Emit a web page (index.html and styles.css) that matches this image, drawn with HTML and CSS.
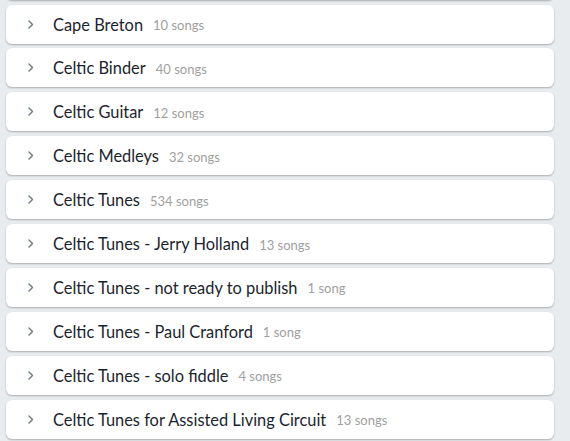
FILE: index.html
```html
<!DOCTYPE html>
<html>
<head>
<meta charset="utf-8">
<link rel="stylesheet" href="styles.css">
</head>
<body>
<div class="list">
  <div class="card"></div>
  <div class="card"><span class="chev"><svg width="6" height="9" viewBox="0 0 6 9"><polyline points="1,1 4.5,4.5 1,8" /></svg></span><span class="name">Cape Breton</span><span class="count">10 songs</span></div>
  <div class="card"><span class="chev"><svg width="6" height="9" viewBox="0 0 6 9"><polyline points="1,1 4.5,4.5 1,8" /></svg></span><span class="name">Celtic Binder</span><span class="count">40 songs</span></div>
  <div class="card"><span class="chev"><svg width="6" height="9" viewBox="0 0 6 9"><polyline points="1,1 4.5,4.5 1,8" /></svg></span><span class="name">Celtic Guitar</span><span class="count">12 songs</span></div>
  <div class="card"><span class="chev"><svg width="6" height="9" viewBox="0 0 6 9"><polyline points="1,1 4.5,4.5 1,8" /></svg></span><span class="name">Celtic Medleys</span><span class="count">32 songs</span></div>
  <div class="card"><span class="chev"><svg width="6" height="9" viewBox="0 0 6 9"><polyline points="1,1 4.5,4.5 1,8" /></svg></span><span class="name">Celtic Tunes</span><span class="count">534 songs</span></div>
  <div class="card"><span class="chev"><svg width="6" height="9" viewBox="0 0 6 9"><polyline points="1,1 4.5,4.5 1,8" /></svg></span><span class="name">Celtic Tunes - Jerry Holland</span><span class="count">13 songs</span></div>
  <div class="card"><span class="chev"><svg width="6" height="9" viewBox="0 0 6 9"><polyline points="1,1 4.5,4.5 1,8" /></svg></span><span class="name">Celtic Tunes - not ready to publish</span><span class="count">1 song</span></div>
  <div class="card"><span class="chev"><svg width="6" height="9" viewBox="0 0 6 9"><polyline points="1,1 4.5,4.5 1,8" /></svg></span><span class="name">Celtic Tunes - Paul Cranford</span><span class="count">1 song</span></div>
  <div class="card"><span class="chev"><svg width="6" height="9" viewBox="0 0 6 9"><polyline points="1,1 4.5,4.5 1,8" /></svg></span><span class="name">Celtic Tunes - solo fiddle</span><span class="count">4 songs</span></div>
  <div class="card"><span class="chev"><svg width="6" height="9" viewBox="0 0 6 9"><polyline points="1,1 4.5,4.5 1,8" /></svg></span><span class="name">Celtic Tunes for Assisted Living Circuit</span><span class="count">13 songs</span></div>
</div>
</body>
</html>
```
FILE: styles.css
```css
html, body {
  margin: 0;
  padding: 0;
  background: #e9ecef;
  overflow: hidden;
  height: 441px;
}
.list {
  display: flex;
  flex-direction: column;
  gap: 4.9px;
  width: 548px;
  margin-left: 6px;
  margin-top: -39.3px;
}
.card {
  flex: none;
  height: 39px;
  background: #ffffff;
  border-radius: 6px;
  box-shadow: 0 1px 2px rgba(0, 0, 0, 0.28);
  display: flex;
  align-items: center;
  padding-left: 22px;
  box-sizing: border-box;
  font-family: Lato, "Noto Sans", sans-serif;
}
.chev {
  display: flex;
  width: 25px;
  flex: none;
}
.chev svg polyline {
  fill: none;
  stroke: #737f8c;
  stroke-width: 1.5;
  stroke-linecap: round;
  stroke-linejoin: round;
}
.name {
  font-size: 16.4px;
  color: #1c1f2e;
}
.count {
  font-size: 13px;
  color: #a0a0a0;
  margin-left: 10px;
  padding-top: 2px;
}
```
